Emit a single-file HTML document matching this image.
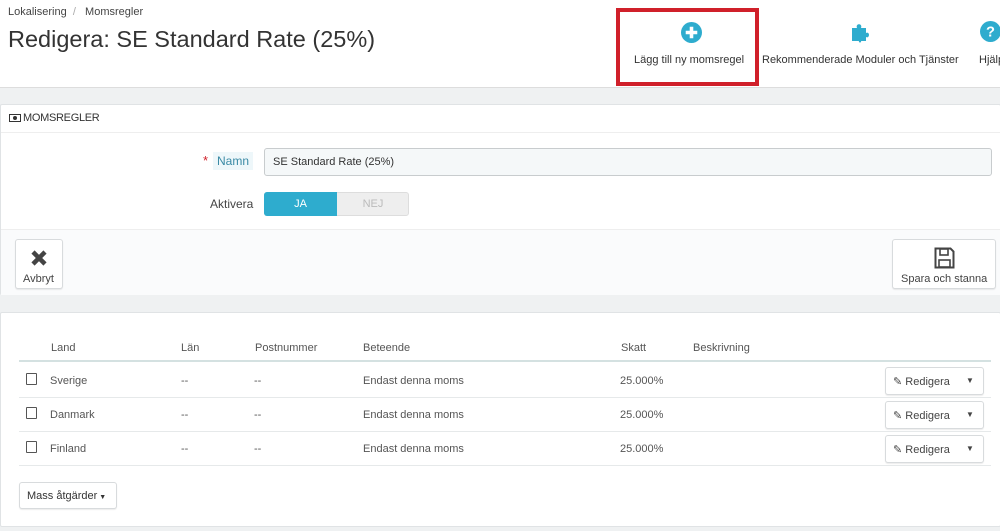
<!DOCTYPE html>
<html><head><meta charset="utf-8"><style>
*{box-sizing:border-box;margin:0;padding:0}
body{width:1000px;height:531px;overflow:hidden;background:#eff1f2;font-family:"Liberation Sans",sans-serif;color:#555;font-size:11px;position:relative}
.abs{position:absolute}
.hdr{left:0;top:0;width:1000px;height:88px;background:#fff;border-bottom:1px solid #ddd}
.panel{background:#fff;border:1px solid #e0e3e5;border-radius:2px}
.btn{background:#fff;border:1px solid #d8dbdd;border-radius:3px;box-shadow:0 1px 1px rgba(0,0,0,.08)}
.row{position:absolute;left:18px;width:972px;height:34px;border-bottom:1px solid #e6e9ea;font-size:11px;color:#555}
.row span{position:absolute;top:11px;white-space:nowrap}
.cb{position:absolute;left:7px;top:9px;width:11px;height:12px;border:1px solid #555;border-radius:1px}
.ed{position:absolute;left:866px;top:3px;width:99px;height:28px;font-size:11px;color:#444}
</style></head><body>
<div class="abs hdr">
 <div class="abs" style="left:8px;top:6px;font-size:11px;color:#444">Lokalisering &nbsp;<span style="color:#aaa">/</span>&nbsp;&nbsp; Momsregler</div>
 <div class="abs" style="left:8px;top:26px;font-size:23.5px;color:#333">Redigera: SE Standard Rate (25%)</div>
 <div class="abs" style="left:616px;top:8px;width:143px;height:78px;border:4px solid #d0202a"></div>
 <svg class="abs" style="left:681px;top:22px" width="21" height="21" viewBox="0 0 20 20"><circle cx="10" cy="10" r="10" fill="#2eacce"/><path d="M10 4.5v11M4.5 10h11" stroke="#fff" stroke-width="3.4"/></svg>
 <div class="abs" style="left:634px;top:54px;font-size:11px;color:#333">Lägg till ny momsregel</div>
 <svg class="abs" style="left:851px;top:21px" width="26" height="22" viewBox="0 0 26 22"><path d="M1 7h5c-2-5 6-5 4 0h5v5c4-2 4 6 0 4v4h-5c1 2-3 2-2 0H1z" fill="#2eacce"/></svg>
 <div class="abs" style="left:762px;top:54px;font-size:11px;color:#333;white-space:nowrap">Rekommenderade Moduler och Tjänster</div>
 <svg class="abs" style="left:980px;top:21px" width="21" height="21" viewBox="0 0 20 20"><circle cx="10" cy="10" r="10" fill="#2eacce"/><text x="10" y="15" font-size="14" font-weight="bold" fill="#fff" text-anchor="middle" font-family="Liberation Sans">?</text></svg>
 <div class="abs" style="left:979px;top:54px;font-size:11px;color:#333">Hjälp</div>
</div>
<div class="abs panel" style="left:0;top:104px;width:1001px;height:191px">
 <div class="abs" style="left:0;top:0;width:1000px;height:28px;border-bottom:1px solid #eee"></div>
 <svg class="abs" style="left:8px;top:9px" width="12" height="8" viewBox="0 0 12 8"><rect x=".5" y=".5" width="11" height="7" fill="none" stroke="#333"/><circle cx="6" cy="4" r="2" fill="#333"/></svg>
 <div class="abs" style="left:22px;top:7px;font-size:11px;color:#333;letter-spacing:-.3px">MOMSREGLER</div>
 <div class="abs" style="left:202px;top:48px;color:#d0202a;font-size:13px">*</div>
 <div class="abs" style="left:212px;top:47px;padding:2px 4px;background:#eef7fa;color:#3a8aa5;font-size:12px">Namn</div>
 <div class="abs" style="left:263px;top:43px;width:728px;height:28px;background:#f5f8f9;border:1px solid #c8ccce;border-radius:3px;font-size:11px;color:#333;padding:7px 8px">SE Standard Rate (25%)</div>
 <div class="abs" style="left:209px;top:92px;font-size:12px;color:#444">Aktivera</div>
 <div class="abs" style="left:263px;top:87px;width:145px;height:24px;background:#eee;border:1px solid #ddd;border-radius:3px"></div>
 <div class="abs" style="left:263px;top:87px;width:73px;height:24px;background:#2eacce;border-radius:3px 0 0 3px;color:#fff;font-size:11px;text-align:center;line-height:24px">JA</div>
 <div class="abs" style="left:336px;top:87px;width:72px;height:24px;color:#bbb;font-size:11px;text-align:center;line-height:24px">NEJ</div>
 <div class="abs" style="left:0;top:124px;width:1000px;height:66px;background:#fafbfc;border-top:1px solid #eee"></div>
 <div class="abs btn" style="left:14px;top:134px;width:48px;height:50px">
  <svg class="abs" style="left:14px;top:9px" width="18" height="18" viewBox="0 0 18 18"><path d="M3 3l12 12M15 3L3 15" stroke="#444" stroke-width="4.5"/></svg>
  <div class="abs" style="left:7px;top:33px;font-size:11px;color:#444">Avbryt</div>
 </div>
 <div class="abs btn" style="left:891px;top:134px;width:104px;height:50px">
  <svg class="abs" style="left:41px;top:7px" width="21" height="22" viewBox="0 0 21 22"><path d="M1.5 1.5h15l3 3v16h-18z" fill="none" stroke="#444" stroke-width="2"/><rect x="6" y="2" width="8" height="6" fill="none" stroke="#444" stroke-width="1.6"/><rect x="5" y="13" width="11" height="7" fill="none" stroke="#444" stroke-width="1.6"/></svg>
  <div class="abs" style="left:8px;top:33px;font-size:11px;color:#444;white-space:nowrap">Spara och stanna</div>
 </div>
</div>
<div class="abs panel" style="left:0;top:312px;width:1001px;height:215px">
 <div class="abs" style="left:18px;top:0;width:972px;height:49px;border-bottom:2px solid #d4e1e1;font-size:11px;color:#555">
  <span class="abs" style="left:32px;top:29px">Land</span>
  <span class="abs" style="left:162px;top:29px">Län</span>
  <span class="abs" style="left:236px;top:29px">Postnummer</span>
  <span class="abs" style="left:344px;top:29px">Beteende</span>
  <span class="abs" style="left:602px;top:29px">Skatt</span>
  <span class="abs" style="left:674px;top:29px">Beskrivning</span>
 </div>
 <div class="row" style="top:51px"><i class="cb"></i><span style="left:31px">Sverige</span><span style="left:162px">--</span><span style="left:235px">--</span><span style="left:344px">Endast denna moms</span><span style="left:601px">25.000%</span><div class="btn ed"><span style="left:7px;top:7px">✎ Redigera</span><span style="left:80px;top:8px;font-size:8px">▼</span></div></div>
 <div class="row" style="top:85px"><i class="cb"></i><span style="left:31px">Danmark</span><span style="left:162px">--</span><span style="left:235px">--</span><span style="left:344px">Endast denna moms</span><span style="left:601px">25.000%</span><div class="btn ed"><span style="left:7px;top:7px">✎ Redigera</span><span style="left:80px;top:8px;font-size:8px">▼</span></div></div>
 <div class="row" style="top:119px"><i class="cb"></i><span style="left:31px">Finland</span><span style="left:162px">--</span><span style="left:235px">--</span><span style="left:344px">Endast denna moms</span><span style="left:601px">25.000%</span><div class="btn ed"><span style="left:7px;top:7px">✎ Redigera</span><span style="left:80px;top:8px;font-size:8px">▼</span></div></div>
 <div class="abs btn" style="left:18px;top:169px;width:98px;height:27px;font-size:11px;color:#333;padding:7px 7px;white-space:nowrap">Mass åtgärder<span style="font-size:7px"> ▼</span></div>
</div>
</body></html>
